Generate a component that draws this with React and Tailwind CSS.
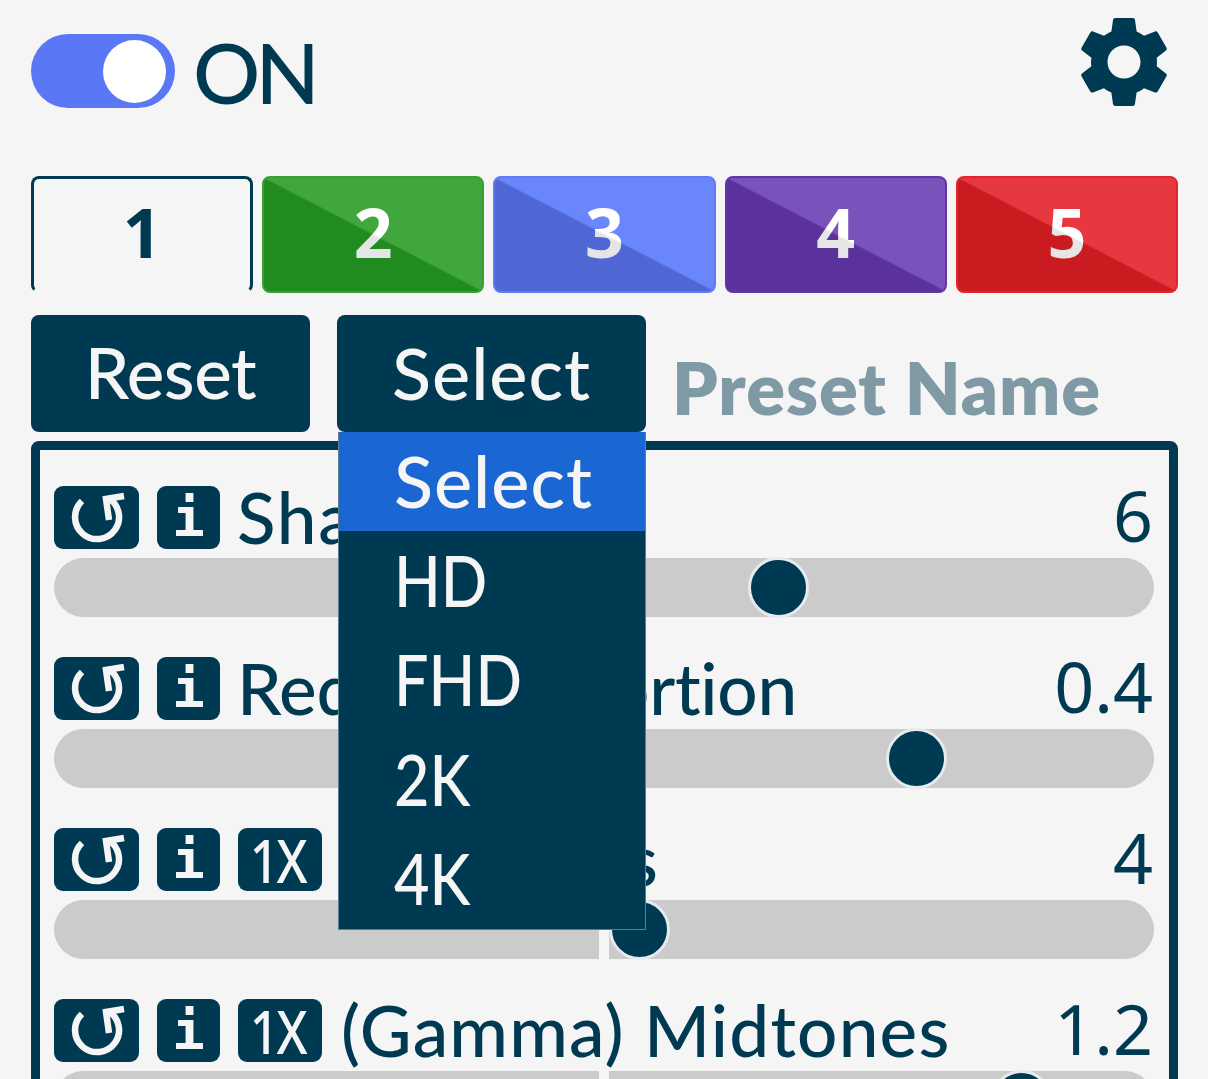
import { useState } from 'react';

const NAVY = '#003a52';

const TABS = [
  { label: '1' },
  { label: '2', bg: 'bg-[linear-gradient(to_top_right,#249b22_49.5%,#41a73d_50.5%)]', border: 'border-[#3a9f36]' },
  { label: '3', bg: 'bg-[linear-gradient(to_top_right,#5873ed_49.5%,#6a86fb_50.5%)]', border: 'border-[#5f7cf5]' },
  { label: '4', bg: 'bg-[linear-gradient(to_top_right,#6537ae_49.5%,#7953bb_50.5%)]', border: 'border-[#6236a6]' },
  { label: '5', bg: 'bg-[linear-gradient(to_top_right,#e01e24_49.5%,#e8383f_50.5%)]', border: 'border-[#e5232f]' },
];

const SLIDERS = [
  { label: 'Sharpness', value: '6', thumb: 724, track: 'tracking-[1.8px]' },
  { label: 'Reduce Distortion', value: '0.4', thumb: 862, track: 'tracking-[-0.3px]' },
  { label: 'Highlights', value: '4', thumb: 585, mult: true, tick: true, track: 'tracking-[0.2px]' },
  { label: '(Gamma) Midtones', value: '1.2', thumb: 967, mult: true, tick: true, track: 'tracking-[1.2px]' },
];

const OPTIONS = ['Select', 'HD', 'FHD', '2K', '4K'];

function ResetIcon() {
  return (
    <svg viewBox="0 0 85 63" className="w-[85px] h-[63px]" fill="none" stroke="#f5f5f5" strokeWidth="6.5">
      <path d="M28 15 A22 22 0 1 0 54 12" />
      <path d="M70 10 L52 13 L55 34" />
    </svg>
  );
}

function IconBox({ className, children }) {
  return (
    <div className={`h-[63px] rounded-[9px] bg-[#003a52] text-[#f5f5f5] flex items-center justify-center shrink-0 ${className}`}>
      {children}
    </div>
  );
}

function SliderRow({ item }) {
  return (
    <div className="mb-[40px]">
      <div className="flex items-start h-[63px] text-[#003a52]">
        <IconBox className="w-[85px]"><ResetIcon /></IconBox>
        <IconBox className="w-[63px] ml-[18px] font-['DejaVu_Sans_Mono',monospace] font-bold text-[54px] leading-none">i</IconBox>
        {item.mult && (
          <IconBox className="w-[84px] ml-[18px] text-[60px] leading-none font-medium font-['Noto_Sans',sans-serif]">
            <span className="scale-x-[0.85] tracking-[-3px] -ml-[6px]">1X</span>
          </IconBox>
        )}
        <span className={`${item.mult ? 'ml-[19px]' : 'ml-[17px]'} mt-[-5px] text-[71px] leading-none font-medium ${item.track} whitespace-nowrap`}>{item.label}</span>
        <span className="ml-auto mr-[1px] mt-[-6px] text-[70px] leading-none font-['Noto_Sans',sans-serif]">{item.value}</span>
      </div>
      <div className="relative h-[59px] mt-[9px] rounded-full bg-[#cbcbcb]">
        {item.tick && <div className="absolute left-[545px] top-0 h-full w-[10px] bg-[#f5f5f5]" />}
        <div
          className="absolute top-[-1px] w-[61px] h-[61px] -ml-[30px] rounded-full bg-[#003a52] border-[3px] border-[#e6ebee]"
          style={{ left: item.thumb }}
        />
      </div>
    </div>
  );
}

export default function App() {
  const [on] = useState(true);

  return (
    <div className="h-[1079px] overflow-hidden bg-[#f5f5f5] pl-[31px] pr-[30px] font-['Lato',sans-serif] text-[#003a52]">
      {/* Header */}
      <div className="flex items-start justify-between h-[176px]">
        <div className="flex items-center mt-[30px]">
          <div className="w-[144px] h-[74px] -mt-[2px] rounded-full bg-[#5a78f5] flex items-center justify-end pr-[9px]">
            <div className="w-[63px] h-[63px] rounded-full bg-white" />
          </div>
          <span className="ml-[18px] text-[84px] leading-none font-medium tracking-[-5px]">{on ? 'ON' : 'OFF'}</span>
        </div>
        <svg viewBox="0 0 24 24" className="w-[110px] h-[110px] mt-[7px] -mr-[1px]" fill={NAVY}>
          <path d="M19.14,12.94c0.04-0.3,0.06-0.61,0.06-0.94c0-0.32-0.02-0.64-0.07-0.94l2.03-1.58c0.18-0.14,0.23-0.41,0.12-0.61 l-1.92-3.32c-0.12-0.22-0.37-0.29-0.59-0.22l-2.39,0.96c-0.5-0.38-1.03-0.7-1.62-0.94L14.4,2.81c-0.04-0.24-0.24-0.41-0.48-0.41 h-3.84c-0.24,0-0.43,0.17-0.47,0.41L9.25,5.35C8.66,5.59,8.12,5.92,7.63,6.29L5.24,5.33c-0.22-0.08-0.47,0-0.59,0.22L2.74,8.87 C2.62,9.08,2.66,9.34,2.86,9.48l2.03,1.58C4.84,11.36,4.8,11.69,4.8,12s0.02,0.64,0.07,0.94l-2.03,1.58 c-0.18,0.14-0.23,0.41-0.12,0.61l1.92,3.32c0.12,0.22,0.37,0.29,0.59,0.22l2.39-0.96c0.5,0.38,1.03,0.7,1.62,0.94l0.36,2.54 c0.05,0.24,0.24,0.41,0.48,0.41h3.84c0.24,0,0.44-0.17,0.47-0.41l0.36-2.54c0.59-0.24,1.13-0.56,1.62-0.94l2.39,0.96 c0.22,0.08,0.47,0,0.59-0.22l1.92-3.32c0.12-0.22,0.07-0.47-0.12-0.61L19.14,12.94z M12,15.6c-1.98,0-3.6-1.62-3.6-3.6 s1.62-3.6,3.6-3.6s3.6,1.62,3.6,3.6S13.98,15.6,12,15.6z" />
        </svg>
      </div>

      {/* Preset tabs */}
      <div className="grid grid-cols-5 gap-[9px] h-[117px] font-['Noto_Sans',sans-serif]">
        {TABS.map((tab) =>
          tab.bg ? (
            <div key={tab.label} className={`relative overflow-hidden rounded-[8px] border-2 ${tab.border} ${tab.bg} flex items-center justify-center text-white text-[68px] font-bold leading-none`}>
              <span className="-mt-[5px]">{tab.label}</span>
              <span className="absolute inset-0 bg-[linear-gradient(to_top_right,rgba(0,0,0,0.1)_49.5%,rgba(0,0,0,0)_50.5%)]" />
            </div>
          ) : (
            <div key={tab.label} className="rounded-[8px] border-[3px] border-[#003a52] border-b-transparent flex items-center justify-center text-[68px] font-bold leading-none">
              <span className="-mt-[5px]">{tab.label}</span>
            </div>
          )
        )}
      </div>

      {/* Preset actions */}
      <div className="flex items-start h-[117px] mt-[22px]">
        <button className="w-[279px] h-[117px] pb-[4px] rounded-[8px] bg-[#003a52] text-[#f5f5f5] text-[71px] leading-none font-medium tracking-[-0.5px]">Reset</button>
        <div className="relative ml-[27px] w-[309px]">
          <button className="w-full h-[117px] pb-[4px] rounded-[8px] bg-[#003a52] text-[#f5f5f5] text-[72px] leading-none font-medium tracking-[1px]">Select</button>
          <ul className="absolute z-10 left-[1px] right-0 top-[117px] h-[498px] bg-[#003a52] border border-[#5d8091] border-t-0 text-[#f5f5f5] text-[72px] leading-none font-medium">
            {OPTIONS.map((opt, i) => (
              <li key={opt} className={`h-[99.4px] pl-[55px] pb-[4px] flex items-center ${i === 0 ? 'bg-[#1a66d2]' : ''}`}>
                <span className={i === 0 ? 'tracking-[1px]' : 'origin-left scale-x-[0.85]'}>{opt}</span>
              </li>
            ))}
          </ul>
        </div>
        <span className="ml-[26px] mt-[36px] text-[72px] leading-none font-extrabold tracking-[1px] text-[#7f99a5] whitespace-nowrap">Preset Name</span>
      </div>

      {/* Sliders */}
      <div className="mt-[9px] h-[700px] rounded-[8px] border-[9px] border-[#003a52] pt-[36px] pl-[14px] pr-[15px]">
        {SLIDERS.map((item) => <SliderRow key={item.label} item={item} />)}
      </div>
    </div>
  );
}
